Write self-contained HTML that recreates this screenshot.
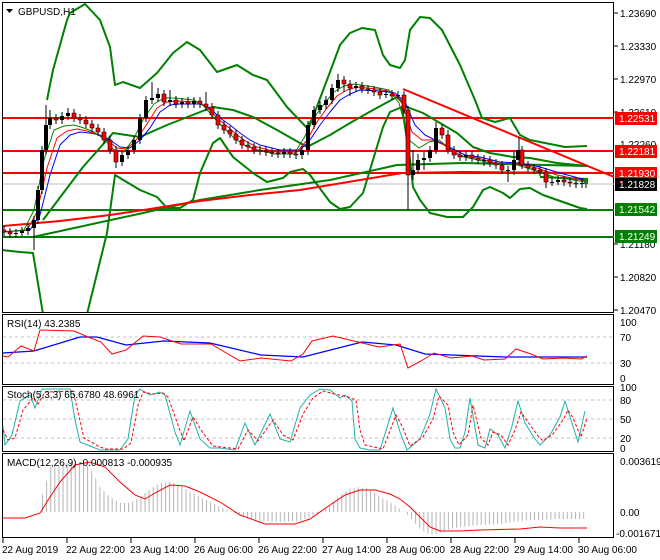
<!DOCTYPE html>
<html><head><meta charset="utf-8"><style>
html,body{margin:0;padding:0;background:#fff}
svg{display:block}
text{font-family:"Liberation Sans",sans-serif;font-size:10px;fill:#000}
</style></head><body>
<svg width="660" height="560" viewBox="0 0 660 560" xmlns="http://www.w3.org/2000/svg">
<defs>
<clipPath id="cm"><rect x="3" y="3" width="611" height="309"/></clipPath>
<pattern id="hist" x="1" y="0" width="4.1" height="10" patternUnits="userSpaceOnUse"><rect x="0" y="0" width="1" height="10" fill="#b4b4b4"/></pattern>
</defs>
<rect width="660" height="560" fill="#fff"/>
<!-- frames -->
<g fill="none" stroke="#000" stroke-width="1">
<rect x="2.5" y="2.5" width="611" height="310"/>
<rect x="2.5" y="314.5" width="611" height="70"/>
<rect x="2.5" y="386.5" width="611" height="65"/>
<rect x="2.5" y="453.5" width="611" height="84"/>
</g>
<g clip-path="url(#cm)" fill="none" stroke-linejoin="round">
<!-- horizontal levels -->
<line x1="3" x2="614" y1="184" y2="184" stroke="#c0c0c0" stroke-width="1"/>
<g stroke="#ff0000" stroke-width="2"><line x1="3" x2="614" y1="118" y2="118"/><line x1="3" x2="614" y1="151" y2="151"/><line x1="3" x2="614" y1="173" y2="173"/></g>
<g stroke="#008000" stroke-width="2"><line x1="3" x2="614" y1="210" y2="210"/><line x1="3" x2="614" y1="237" y2="237"/></g>
<!-- bollinger / long MAs -->
<g stroke="#008000" stroke-width="2">
<polyline points="47,100 53,70 67,20 70,13 85,4 100,20 110,47 115,85 123,82 140,88 157,73 173,53 187,42 200,50 217,72 237,65 253,75 267,80 287,107 307,128 313,117 330,72 340,45 350,33 362,28 375,30 383,55 390,65 400,68 405,60 410,30 420,17 430,18 442,30 460,65 475,100 482,118 495,122 510,118 520,135 530,140 545,143 565,147 587,146"/>
<polyline points="2,250 20,252 33,253 43,314"/>
<polyline points="87,314 107,233 115,175 140,190 157,197 167,208 180,208 193,200 200,173 213,143 220,138 233,157 253,173 267,182 283,178 290,172 303,169 310,175 330,202 340,209 350,207 363,193 373,160 383,127 390,112 402,107 410,160 413,187 420,200 430,213 447,217 463,217 473,207 483,190 490,187 503,193 510,198 520,189 530,188 543,195 563,202 580,208 587,209"/>
<polyline points="43,220 83,167 113,133 140,137 167,125 213,107 233,110 253,117 277,130 300,143 307,147 330,135 350,123 373,110 397,97 407,107 423,113 440,123 457,133 473,147 490,153 513,157 530,158 557,163 587,166"/>
<polyline points="33,237 143,213 200,200 260,190 330,180 397,165 463,163 587,166"/>
<polyline points="540,177 587,179"/>
</g>
<polyline stroke="#ff0000" stroke-width="2" points="3,226 60,221 110,215 150,209 200,201 250,195 300,190 330,185 402,173 463,172 587,173"/>
<line x1="403" y1="89" x2="614" y2="177" stroke="#ff0000" stroke-width="2"/>
<!-- fast MAs -->
<g stroke-width="1">
<polyline stroke="#0000ff" points="2,232 30,230 40,215 50,175 60,145 70,135 80,132 90,133 100,135 110,140 120,147 130,148 140,140 150,128 160,112 170,105 180,104 200,104 210,108 220,118 230,125 240,133 250,140 260,145 280,150 300,150 310,140 320,125 330,112 340,100 350,94 360,90 380,91 395,93 405,102 415,125 425,135 435,140 445,145 455,150 465,155 480,157 500,162 520,163 540,167 560,173 586,180"/>
<polyline stroke="#ff0000" points="2,232 27,230 37,212 47,168 57,138 67,131 77,129 87,131 97,134 107,140 117,148 127,149 137,139 147,124 157,108 167,102 177,101 197,102 207,107 217,118 227,126 237,135 247,142 257,147 277,152 297,152 307,140 317,122 327,108 337,96 347,90 357,87 377,89 392,92 402,103 412,132 422,140 432,140 442,144 452,150 462,156 477,158 497,163 517,164 537,168 557,175 586,181"/>
<polyline stroke="#008000" points="2,232 24,230 34,210 44,160 54,130 64,126 74,125 84,128 94,132 104,139 114,150 124,152 134,138 144,118 154,104 164,98 174,98 194,100 204,106 214,118 224,128 234,138 244,145 254,149 274,154 294,154 304,138 314,118 324,104 334,92 344,86 354,84 374,87 389,90 399,103 409,140 419,148 429,142 439,140 449,148 459,156 474,159 494,164 514,164 534,170 554,177 586,182"/>
</g>
<!-- candle wicks -->
<path stroke="#000" stroke-width="1" d="M4,226V236M10,228V238M16,229V238M22,227V236M28,224V235M34,216V250M38,186V224M42,146V194M46,105V154M50,110V129M56,114V124M62,112V124M68,108V120M74,109V122M80,114V124M86,116V128M92,120V132M98,124V136M104,128V144M110,136V154M116,146V168M122,151V166M128,146V159M134,136V154M140,114V144M146,96V122M152,82V104M158,88V102M164,90V106M170,90V106M176,96V108M182,98V108M188,97V108M194,97V108M200,97V108M206,92V111M212,103V119M218,111V129M224,121V134M230,126V138M236,130V144M242,136V149M248,141V151M254,143V154M260,146V155M266,147V156M272,148V157M278,149V158M284,148V158M290,148V158M296,150V159M302,146V159M308,121V155M314,106V129M320,101V114M326,96V109M332,84V104M338,74V92M344,76V92M350,80V96M356,82V92M362,82V93M368,85V94M374,86V96M380,88V99M386,90V98M392,90V100M398,91V99M404,91V114M408,106V210M413,150V180M418,154V174M424,152V170M430,146V162M436,122V154M442,124V139M448,130V154M454,146V159M460,151V161M466,151V161M472,151V162M478,154V164M484,155V166M490,156V167M496,159V169M502,161V174M508,166V182M514,152V175M519,137V164M522,146V169M528,161V172M534,164V174M540,166V176M546,168V188M552,178V186M558,176V185M564,176V186M570,178V187M576,179V188M582,179V188M586,180V188"/>
<!-- bearish bodies -->
<path fill="#ff0000" stroke="#000" stroke-width="0.6" d="M2,230h4v2h-4zM8,232h4v2h-4zM54,118h4v2h-4zM72,113h4v5h-4zM78,118h4v2h-4zM84,120h4v4h-4zM90,124h4v4h-4zM96,128h4v4h-4zM102,132h4v8h-4zM108,140h4v10h-4zM114,150h4v12h-4zM162,94h4v8h-4zM174,100h4v4h-4zM186,102h4v2h-4zM198,101h4v3h-4zM204,104h4v3h-4zM210,107h4v8h-4zM216,115h4v10h-4zM222,125h4v5h-4zM228,130h4v4h-4zM234,134h4v6h-4zM240,140h4v5h-4zM246,145h4v2h-4zM252,147h4v3h-4zM258,150h4v1h-4zM264,151h4v1h-4zM270,152h4v1h-4zM276,153h4v1h-4zM288,152h4v2h-4zM294,154h4v1h-4zM342,80h4v4h-4zM348,84h4v4h-4zM360,86h4v3h-4zM366,89h4v1h-4zM372,90h4v2h-4zM378,92h4v3h-4zM390,94h4v2h-4zM402,95h4v15h-4zM406,110h4v65h-4zM440,128h4v7h-4zM446,135h4v15h-4zM452,150h4v5h-4zM458,155h4v2h-4zM470,155h4v3h-4zM476,158h4v2h-4zM488,160h4v3h-4zM494,163h4v2h-4zM500,165h4v5h-4zM520,150h4v15h-4zM526,165h4v3h-4zM532,168h4v2h-4zM538,170h4v2h-4zM544,172h4v10h-4zM562,180h4v2h-4zM568,182h4v1h-4zM574,183h4v1h-4z"/>
<!-- bullish bodies -->
<path fill="#000" d="M14,233h4v1h-4zM20,231h4v2h-4zM26,228h4v3h-4zM32,220h4v8h-4zM36,190h4v30h-4zM40,150h4v40h-4zM44,125h4v25h-4zM48,118h4v7h-4zM60,116h4v4h-4zM66,113h4v3h-4zM120,155h4v7h-4zM126,150h4v5h-4zM132,140h4v10h-4zM138,118h4v22h-4zM144,100h4v18h-4zM150,98h4v2h-4zM156,94h4v4h-4zM168,100h4v2h-4zM180,102h4v2h-4zM192,101h4v3h-4zM282,152h4v2h-4zM300,150h4v5h-4zM306,125h4v25h-4zM312,110h4v15h-4zM318,105h4v5h-4zM324,100h4v5h-4zM330,88h4v12h-4zM336,80h4v8h-4zM354,86h4v2h-4zM384,94h4v1h-4zM396,95h4v1h-4zM411,170h4v5h-4zM416,160h4v10h-4zM422,158h4v2h-4zM428,150h4v8h-4zM434,128h4v22h-4zM464,155h4v2h-4zM482,160h4v1h-4zM506,170h4v1h-4zM512,160h4v10h-4zM516,150h4v10h-4zM550,182h4v1h-4zM556,180h4v2h-4zM580,183h4v1h-4z"/>
<path fill="#1a7a1a" d="M584,178h4v6h-4z"/>
</g>
<!-- title -->
<path d="M6,9h7l-3.5,4z" fill="#000"/>
<text x="18" y="15">GBPUSD,H1</text>
<!-- right axis -->
<g stroke="#000"><line x1="614" x2="618" y1="13" y2="13"/><line x1="614" x2="618" y1="46" y2="46"/><line x1="614" x2="618" y1="79" y2="79"/><line x1="614" x2="618" y1="112" y2="112"/><line x1="614" x2="618" y1="244" y2="244"/><line x1="614" x2="618" y1="277" y2="277"/><line x1="614" x2="618" y1="310" y2="310"/></g>
<text x="620" y="17">1.23690</text>
<text x="620" y="50">1.23330</text>
<text x="620" y="83">1.22970</text>
<text x="620" y="116">1.22610</text>
<text x="620" y="148">1.22260</text>
<text x="620" y="248">1.21180</text>
<text x="620" y="281">1.20820</text>
<text x="620" y="314">1.20470</text>
<rect x="615" y="112" width="42" height="13" fill="#ff0000"/><text x="619" y="122" style="fill:#fff">1.22531</text>
<rect x="615" y="145" width="42" height="13" fill="#ff0000"/><text x="619" y="155" style="fill:#fff">1.22181</text>
<rect x="615" y="167" width="42" height="13" fill="#ff0000"/><text x="619" y="177" style="fill:#fff">1.21930</text>
<rect x="615" y="178" width="42" height="13" fill="#000"/><text x="619" y="188" style="fill:#fff">1.21828</text>
<rect x="615" y="203" width="42" height="13" fill="#008000"/><text x="619" y="213" style="fill:#fff">1.21542</text>
<rect x="615" y="230" width="42" height="13" fill="#008000"/><text x="619" y="240" style="fill:#fff">1.21249</text>
<!-- RSI -->
<g stroke="#c0c0c0" stroke-dasharray="3,3"><line x1="3" x2="613" y1="337" y2="337"/><line x1="3" x2="613" y1="363" y2="363"/></g>
<polyline fill="none" stroke="#0000ff" stroke-width="1.2" points="3,353 34,351 80,337 97,337 126,345 164,341 210,343 261,355 303,357 362,342 396,345 425,354 505,357 587,357"/>
<polyline fill="none" stroke="#ff0000" stroke-width="1" points="3,356 8,357 21,346 34,351 40,330 74,331 88,337 101,342 112,354 126,350 143,336 160,337 181,344 211,344 240,361 261,358 291,361 303,354 312,341 333,336 358,342 379,347 400,344 408,368 421,361 434,353 451,358 472,356 484,360 505,359 516,349 531,354 543,359 564,358 581,359 587,356"/>
<text x="7" y="327">RSI(14) 43.2385</text>
<text x="620" y="326">100</text><text x="620" y="341">70</text><text x="620" y="367">30</text><text x="620" y="382">0</text>
<!-- Stoch -->
<g stroke="#c0c0c0" stroke-dasharray="3,3"><line x1="3" x2="613" y1="400" y2="400"/><line x1="3" x2="613" y1="419" y2="419"/><line x1="3" x2="613" y1="438" y2="438"/></g>
<polyline fill="none" stroke="#20b2aa" stroke-width="1" points="3,426 5,445 12,435 20,401 30,395 35,408 42,389 70,389 75,420 80,442 95,448 100,450 120,450 128,439 135,395 140,389 150,395 160,392 165,395 175,432 180,445 190,411 200,439 210,448 220,448 235,450 245,423 255,445 270,414 280,439 290,442 300,408 310,395 320,389 330,390 340,398 345,395 352,401 355,439 360,448 370,450 380,450 393,408 400,432 407,450 420,439 430,414 436,389 445,408 450,439 455,448 460,448 465,432 470,398 478,445 485,448 490,429 498,435 505,448 512,426 518,401 525,423 535,439 540,445 550,435 560,417 565,401 570,417 578,442 585,411"/>
<polyline fill="none" stroke="#ff0000" stroke-width="1" stroke-dasharray="3,2" points="3,430 8,440 15,438 23,410 33,398 38,404 45,392 73,391 78,412 84,438 98,446 105,449 123,449 131,443 138,405 143,392 153,394 163,393 168,397 178,425 184,441 193,417 203,433 213,446 238,449 248,430 258,441 273,420 283,435 293,440 303,414 313,398 323,391 343,396 348,397 356,400 360,430 365,445 383,449 396,415 403,428 410,446 423,437 433,419 439,396 448,405 453,432 459,445 468,435 473,405 481,438 488,445 493,432 501,435 508,445 515,430 521,412 528,422 538,436 543,441 553,434 563,420 568,410 573,418 581,437 587,418"/>
<text x="7" y="398">Stoch(5,3,3) 65.6780 48.6961</text>
<text x="620" y="391">100</text><text x="620" y="404">80</text><text x="620" y="423">50</text><text x="620" y="442">20</text><text x="620" y="452">0</text>
<!-- MACD -->
<polygon fill="url(#hist)" points="3,512 40,512 40,502 45,487 50,467 60,465 70,462 80,462 90,467 95,477 100,487 110,497 120,503 130,503 140,497 150,489 160,483 170,482 180,485 190,492 200,497 210,502 220,507 230,511 240,515 250,518 260,521 280,522 300,521 310,517 320,512 330,505 340,495 350,489 360,487 370,489 380,497 390,502 400,509 410,517 420,529 430,535 440,533 450,529 460,527 480,525 500,524 520,521 540,520 560,519 587,519 587,512"/>
<polyline fill="none" stroke="#ff0000" stroke-width="1" points="3,518 25,518 40,513 50,497 60,482 75,465 90,462 105,467 120,482 135,495 145,499 155,493 170,485 185,486 200,492 220,502 240,515 265,524 295,524 310,519 330,505 345,495 360,490 375,490 390,494 400,499 410,507 420,517 430,527 440,531 460,531 480,530 520,529 540,527 560,528 587,528"/>
<text x="7" y="466">MACD(12,26,9) -0.000813 -0.000935</text>
<text x="620" y="465">0.003619</text><text x="620" y="516">0.00</text><text x="616" y="537">-0.001671</text>
<!-- date axis -->
<g stroke="#000"><line x1="3" x2="3" y1="538" y2="543"/><line x1="67" x2="67" y1="538" y2="543"/><line x1="131" x2="131" y1="538" y2="543"/><line x1="195" x2="195" y1="538" y2="543"/><line x1="259" x2="259" y1="538" y2="543"/><line x1="323" x2="323" y1="538" y2="543"/><line x1="387" x2="387" y1="538" y2="543"/><line x1="451" x2="451" y1="538" y2="543"/><line x1="515" x2="515" y1="538" y2="543"/><line x1="579" x2="579" y1="538" y2="543"/></g>
<text x="2" y="553">22 Aug 2019</text>
<text x="66" y="553">22 Aug 22:00</text>
<text x="130" y="553">23 Aug 14:00</text>
<text x="194" y="553">26 Aug 06:00</text>
<text x="258" y="553">26 Aug 22:00</text>
<text x="322" y="553">27 Aug 14:00</text>
<text x="386" y="553">28 Aug 06:00</text>
<text x="450" y="553">28 Aug 22:00</text>
<text x="514" y="553">29 Aug 14:00</text>
<text x="578" y="553">30 Aug 06:00</text>
</svg>
</body></html>
